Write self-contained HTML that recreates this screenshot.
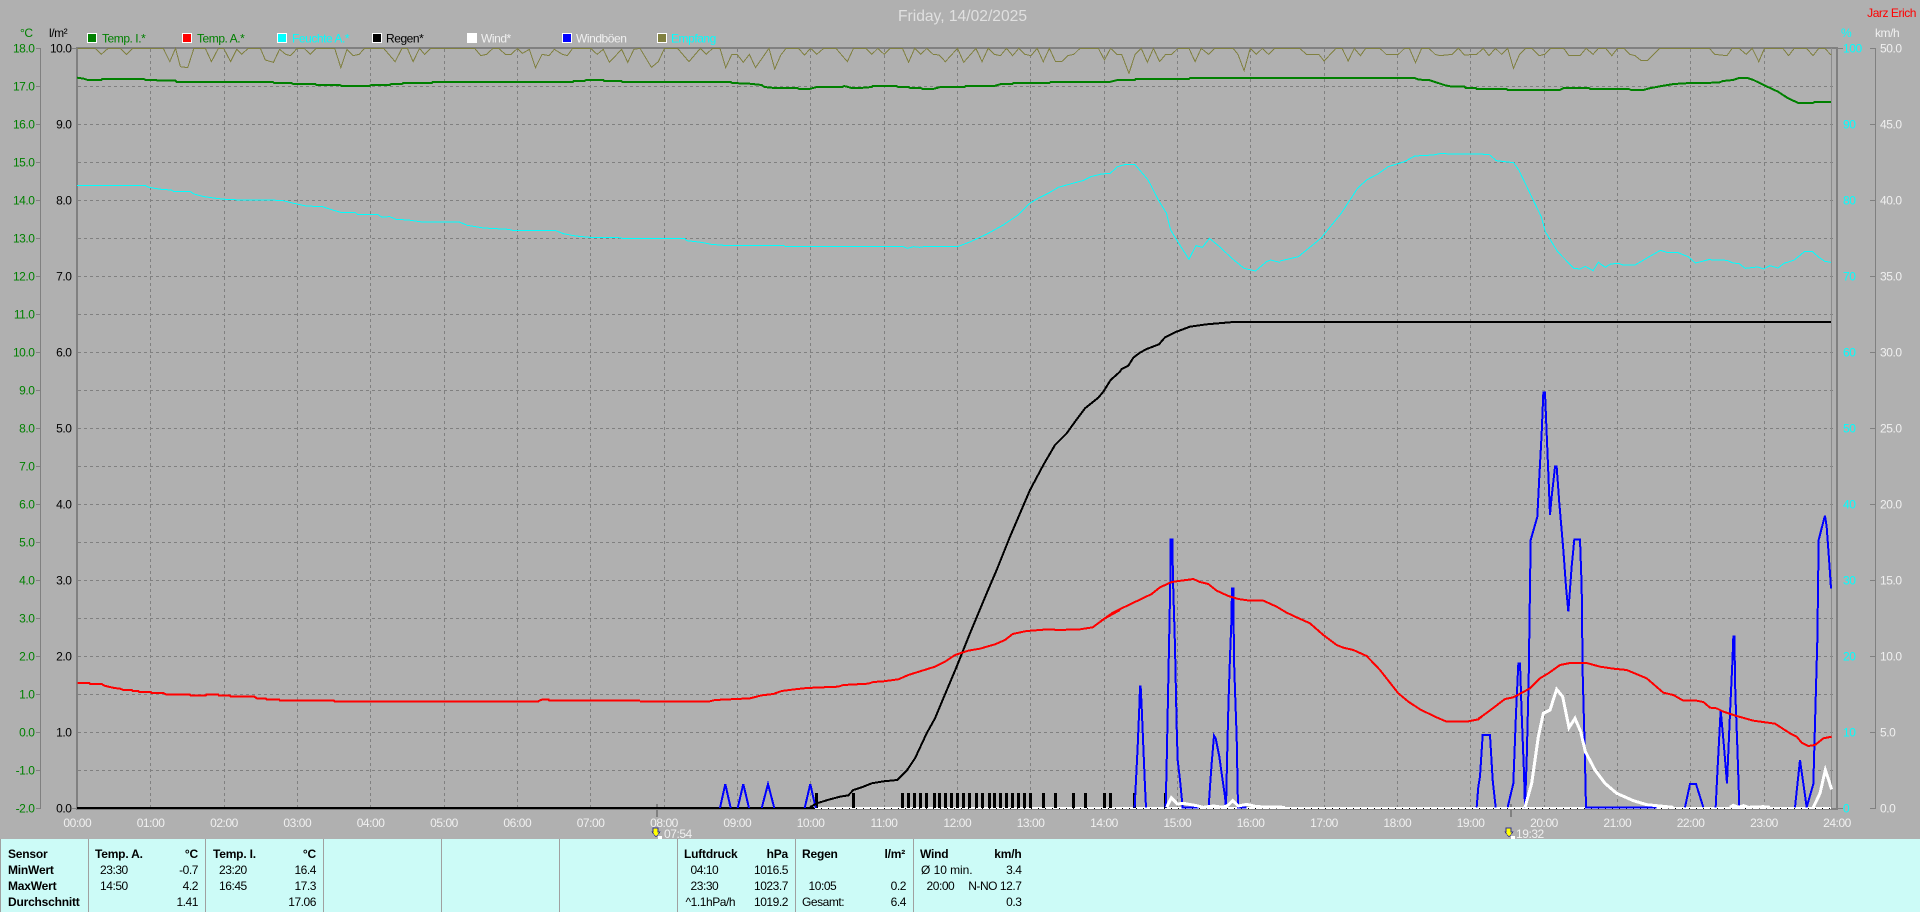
<!DOCTYPE html>
<html lang="de">
<head>
<meta charset="utf-8">
<title>Friday, 14/02/2025</title>
<style>
html,body{margin:0;padding:0;background:#b0b0b0;overflow:hidden}
svg{display:block}
text{font-family:"Liberation Sans",Arial,sans-serif;font-size:12px;letter-spacing:-.45px}
.l{fill:none;stroke-linejoin:miter;shape-rendering:crispEdges;vector-effect:non-scaling-stroke}
.e{text-anchor:end}
.m{text-anchor:middle}
.b{font-weight:bold;letter-spacing:-.2px;fill:#000}
.k{fill:#000}
.w{fill:#f0f0f0}
.g{fill:#008000}
.c{fill:#00ffff}
</style>
</head>
<body>
<svg width="1920" height="912" viewBox="0 0 1920 912" xmlns="http://www.w3.org/2000/svg">
<rect width="1920" height="912" fill="#b0b0b0"/>

<!-- grid -->
<path shape-rendering="crispEdges" fill="none" stroke="#808080" stroke-width="1" stroke-dasharray="3 3" d="M78 86.5H1837M78 124.5H1837M78 162.5H1837M78 200.5H1837M78 238.5H1837M78 276.5H1837M78 314.5H1837M78 352.5H1837M78 390.5H1837M78 428.5H1837M78 466.5H1837M78 504.5H1837M78 542.5H1837M78 580.5H1837M78 618.5H1837M78 656.5H1837M78 694.5H1837M78 732.5H1837M78 770.5H1837"/>
<path shape-rendering="crispEdges" fill="none" stroke="#808080" stroke-width="1" stroke-dasharray="3 3" d="M150.500 49V808M224.500 49V808M297.500 49V808M370.500 49V808M444.500 49V808M517.500 49V808M590.500 49V808M664.500 49V808M737.500 49V808M810.500 49V808M884.500 49V808M957.500 49V808M1030.500 49V808M1104.500 49V808M1177.500 49V808M1250.500 49V808M1324.500 49V808M1397.500 49V808M1470.500 49V808M1544.500 49V808M1617.500 49V808M1690.500 49V808M1764.500 49V808"/>

<!-- axes -->
<g shape-rendering="crispEdges" fill="#808080">
<rect x="76" y="47" width="2" height="763"/>
<rect x="76" y="47" width="1762" height="2"/>
<rect x="1836" y="47" width="2" height="763"/>
<rect x="1831" y="48" width="1" height="760" fill="#8c8c8c"/>
<rect x="76" y="808" width="1762" height="2"/>
<rect x="40" y="48" width="1" height="761"/>
<rect x="1875" y="48" width="1" height="761"/>
<rect x="72" y="48" width="4" height="1"/><rect x="72" y="808" width="4" height="1"/>
<rect x="1838" y="48" width="5" height="1"/><rect x="1838" y="808" width="5" height="1"/>
<path d="M36 48h4v1h-4zM36 86h4v1h-4zM36 124h4v1h-4zM36 162h4v1h-4zM36 200h4v1h-4zM36 238h4v1h-4zM36 276h4v1h-4zM36 314h4v1h-4zM36 352h4v1h-4zM36 390h4v1h-4zM36 428h4v1h-4zM36 466h4v1h-4zM36 504h4v1h-4zM36 542h4v1h-4zM36 580h4v1h-4zM36 618h4v1h-4zM36 656h4v1h-4zM36 694h4v1h-4zM36 732h4v1h-4zM36 770h4v1h-4zM36 808h4v1h-4z"/>
<path d="M1870 48h5v1h-5zM1870 124h5v1h-5zM1870 200h5v1h-5zM1870 276h5v1h-5zM1870 352h5v1h-5zM1870 428h5v1h-5zM1870 504h5v1h-5zM1870 580h5v1h-5zM1870 656h5v1h-5zM1870 732h5v1h-5zM1870 808h5v1h-5z"/>
<rect x="656" y="804" width="2" height="13"/>
<rect x="1510" y="804" width="2" height="13"/>
</g>

<!-- Empfang -->
<g stroke="#808040" stroke-width="1">
<polyline class="l" transform="scale(.40816,.33333)" points="190,145 233,145 248,163 265,145 295,145 310,163 325,145 400,145 416,185 430,145 442,200 460,203 475,145 503,145 518,185 535,145 548,145 565,185 580,148 592,163 608,145 638,145 650,180 670,187 685,148 700,163 712,167 728,145 745,145 760,163 775,145 820,145 835,203 850,148 865,167 880,163 893,145 940,145 968,185 985,145 998,145 1012,185 1028,145 1040,163 1055,145 1163,145 1178,167 1192,163 1208,145 1222,145 1238,163 1252,163 1268,145 1280,160 1297,148 1312,203 1328,163 1345,167 1358,148 1378,163 1390,167 1403,145 1447,145 1463,163 1478,148 1493,187 1523,148 1538,187 1553,148 1568,145"/>
<polyline class="l" transform="translate(640,30) scale(.40816,.33333)" points="0,55 28,112 45,95 60,55 92,55 120,95 148,55 162,73 178,55 196,55 210,113 225,73 238,73 253,97 268,73 283,113 316,55 330,117 345,75 358,55 388,55 403,75 418,55 433,73 450,55 480,55 508,95 523,55 553,55 568,73 583,55 598,73 613,55 643,55 658,97 673,55 688,73 703,55 718,73 733,75 748,95 778,55 793,97 823,55 838,95 853,55 868,73 883,77 898,55 913,77 928,55 943,73 958,77 973,55 988,95 1003,55 1018,95 1033,95 1048,77 1063,73 1078,55 1123,55 1138,90 1153,55 1168,73 1180,73 1198,130 1213,73 1228,55 1243,97 1258,55 1273,95 1288,73 1303,73 1318,55 1345,55 1360,95 1375,55 1393,73 1408,55 1453,55 1465,73 1480,122 1495,55 1510,73 1525,55 1540,73 1555,55 1568,55"/>
<polyline class="l" transform="translate(1280,0) scale(.40816,.33333)" points="0,145 48,145 65,163 95,163 108,183 137,145 152,145 167,183 182,145 197,167 210,145 245,145 260,163 290,163 305,145 317,145 332,188 347,145 365,145 380,163 392,167 422,163 437,145 452,165 482,163 498,145 512,167 528,145 543,163 558,145 572,205 587,163 602,145 617,145 635,167 648,163 663,145 695,145 708,167 735,167 750,145 767,163 780,145 798,145 813,167 827,145 843,145 857,163 870,167 885,182 900,182 930,145 1052,145 1065,163 1095,167 1108,145 1125,145 1142,163 1157,145 1173,185 1187,145 1232,145 1246,167 1260,145 1290,145 1306,167 1320,145 1335,145 1350,165"/>
</g>

<!-- Temp I -->
<g stroke="#008000" stroke-width="2">
<polyline class="l" transform="scale(.40816,.33333)" points="189,233 205,236 215,240 248,240 250,237 352,237 357,240 383,240 385,242 430,242 433,246 668,246 672,249 714,249 718,252 772,252 776,255 833,255 837,258 905,258 910,255 955,255 958,252 985,252 988,249 1058,249 1060,246 1403,246 1406,243 1432,243 1436,240 1478,240 1480,243 1522,243 1525,246 1568,246"/>
<polyline class="l" transform="translate(640,30) scale(.40816,.33333)" points="0,156 222,156 226,159 268,161 298,165 305,171 330,174 385,174 390,177 415,177 433,171 495,171 500,168 510,171 518,174 540,174 568,171 570,168 628,168 632,171 658,171 662,174 688,174 692,177 718,177 736,171 795,171 798,168 868,168 885,162 912,162 915,159 1003,159 1006,156 1150,156 1170,150 1212,150 1215,147 1345,147 1348,144 1568,144"/>
<polyline class="l" transform="translate(1280,0) scale(.40816,.33333)" points="0,234 330,234 340,239 365,240 380,246 405,256 422,260 452,260 455,264 480,264 482,267 555,267 558,270 685,270 695,264 757,264 760,267 855,267 860,270 890,270 905,265 935,258 965,252 1005,249 1075,248 1085,243 1110,240 1125,234 1145,234 1160,240 1185,255 1220,275 1245,295 1270,309 1305,309 1310,306 1350,306"/>
</g>

<!-- Feuchte -->
<g stroke="#00ffff" stroke-width="1">
<polyline class="l" transform="scale(.40816,.33333)" points="189,556 355,556 365,562 395,568 420,570 425,574 465,574 475,582 500,590 530,595 560,599 690,601 720,610 750,618 790,620 815,630 835,637 870,637 875,643 925,643 935,651 955,650 970,658 1000,660 1035,666 1125,666 1145,676 1185,684 1245,688 1255,691 1360,691 1380,701 1410,708 1445,712 1515,713 1525,715 1568,715"/>
<polyline class="l" transform="translate(640,30) scale(.40816,.33333)" points="0,625 108,625 115,632 150,637 175,643 205,646 350,646 358,650 645,650 655,655 670,650 685,652 695,650 778,650 810,635 850,612 890,585 925,556 955,520 975,505 1000,490 1025,472 1060,460 1085,452 1105,440 1130,432 1152,430 1170,410 1190,403 1212,403 1245,450 1270,510 1290,550 1300,600 1320,640 1345,688 1362,647 1378,652 1395,625 1420,650 1450,685 1480,715 1508,723 1535,695 1545,690 1568,697"/>
<polyline class="l" transform="translate(1280,0) scale(.40816,.33333)" points="0,783 45,770 70,745 100,715 150,640 190,565 212,540 240,522 265,500 305,485 330,468 375,465 392,461 512,463 530,482 572,488 585,510 640,650 650,695 680,755 720,805 735,807 748,799 767,812 780,787 797,802 810,792 830,790 840,795 870,795 905,770 932,751 950,758 975,758 1000,770 1018,789 1050,779 1095,781 1110,789 1125,791 1140,805 1170,801 1185,807 1200,797 1220,804 1235,790 1260,780 1285,755 1305,755 1320,772 1335,784 1350,787"/>
</g>

<!-- baseline -->
<path shape-rendering="crispEdges" d="M77 808H814" stroke="#000" stroke-width="2" fill="none"/>
<path shape-rendering="crispEdges" d="M814 808H1831" stroke="#fff" stroke-width="2" fill="none"/>
<path shape-rendering="crispEdges" d="M814 808.500H1831" stroke="#000" stroke-width="1" stroke-dasharray="1 6" fill="none"/>

<!-- Regen bars -->
<path shape-rendering="crispEdges" stroke="#000" stroke-width="3" fill="none" d="M816.500 793V808M853.500 793V808M902.500 793V808M908.500 793V808M914.500 793V808M920.500 793V808M926.500 793V808M934.500 793V808M939.500 793V808M945.500 793V808M951.500 793V808M957.500 793V808M963.500 793V808M969.500 793V808M976.500 793V808M982.500 793V808M989.500 793V808M994.500 793V808M1000.500 793V808M1006.500 793V808M1012.500 793V808M1018.500 793V808M1024.500 793V808M1030.500 793V808M1043.500 793V808M1055.500 793V808M1073.500 793V808M1085.500 793V808M1104.500 793V808M1110.500 793V808M1134.500 793V808M1165.500 793V808"/>

<!-- Windboeen -->
<g stroke="#0000ff" stroke-width="2">
<polyline class="l" points="720,808 725.300,784 730.700,808"/>
<polyline class="l" points="737.700,808 743.300,784 749,808"/>
<polyline class="l" points="761.700,808 768,784 774.300,808"/>
<polyline class="l" points="804.700,808 810.300,784 815.700,808"/>
<g transform="translate(1100,380) scale(.33333)">
<polyline class="l" points="104,1282 107,1220 113,1100 118,980 120,920 122,920 125,980 130,1100 135,1220 138,1282"/>
<polyline class="l" points="197,1282 200,1150 207,800 211,600 212,478 217,478 219,600 225,800 230,1040 233,1140 240,1200 248,1282 295,1282"/>
<polyline class="l" points="326,1282 330,1220 335,1150 342,1067 347,1075 358,1130 365,1180 375,1250 378,1282 383,1060 386,950 390,830 394,730 396,625 400,625 402,840 406,960 410,1070 414,1282 440,1282"/>
</g>
<g transform="translate(1480,380) scale(.33333)">
<polyline class="l" points="-10,1282 -5,1220 0,1190 8,1065 30,1065 38,1200 47,1282"/>
<polyline class="l" points="83,1282 100,1210 108,1000 115,850 120,850 125,1000 132,1180 135,1282 140,1140 146,900 152,480 172,410 178,290 185,160 190,38 195,38 200,160 205,280 210,405 215,350 225,260 230,260 238,370 250,510 258,620 265,695 275,560 283,478 300,478 305,620 308,880 314,1100 318,1282 530,1282"/>
<polyline class="l" points="615,1282 630,1212 648,1212 670,1282"/>
<polyline class="l" points="707,1282 712,1180 722,990 732,1100 741,1210 750,1000 757,850 760,770 763,770 766,940 772,1100 778,1282"/>
<polyline class="l" points="945,1282 960,1140 970,1210 980,1282 1000,1212 1007,960 1012,780 1016,480 1030,425 1035,407 1040,440 1048,550 1053,625"/>
</g>
</g>

<!-- Wind -->
<g stroke="#ffffff" stroke-width="3">
<polyline class="l" transform="translate(1100,380) scale(.33333)" points="200,1282 214,1253 232,1272 250,1270 290,1277 310,1282 340,1278 370,1282 385,1275 398,1262 415,1278 440,1273 470,1280 555,1282"/>
<polyline class="l" transform="translate(1480,380) scale(.33333)" points="135,1282 155,1210 175,1070 190,1000 210,990 230,928 248,950 267,1043 285,1015 302,1055 316,1115 345,1170 375,1210 410,1240 460,1262 500,1274 560,1280 580,1282"/>
<polyline class="l" transform="translate(1480,380) scale(.33333)" points="750,1282 760,1276 775,1282 790,1277 805,1282 850,1280 870,1282"/>
<polyline class="l" transform="translate(1480,380) scale(.33333)" points="1000,1282 1020,1240 1036,1170 1055,1228"/>
</g>

<!-- Regen -->
<g stroke="#000" stroke-width="2">
<polyline class="l" transform="translate(640,330) scale(.33333)" points="510,1432 530,1420 570,1408 600,1400 625,1396 640,1380 665,1372 695,1360 730,1354 772,1350 800,1322 825,1285 860,1210 885,1165 910,1105 950,1010 990,910 1040,790 1070,720 1110,620 1170,480 1210,405 1245,345 1280,310 1300,282 1335,235 1375,203 1390,185 1412,150 1440,125"/>
<polyline class="l" transform="translate(1090,310) scale(.33333)" points="90,185 95,177 115,167 130,143 150,128 170,117 207,103 225,82 260,65 300,50 350,43 430,36 600,36"/>
<polyline class="l" points="1290,322 1831,322"/>
</g>

<!-- Temp A -->
<g stroke="#ff0000" stroke-width="2">
<polyline class="l" transform="translate(70,670) scale(.33333)" points="22,39 58,39 60,42 95,42 103,47 115,50 133,54 150,56 160,60 186,60 188,63 205,63 207,66 242,66 245,69 280,69 290,74 360,74 362,77 407,77 409,74 445,74 447,77 480,77 482,80 553,80 562,86 588,86 590,89 628,89 630,92 792,92 794,95 1404,95 1408,92 1416,89 1436,89 1438,92 1710,92"/>
<polyline class="l" transform="translate(640,330) scale(.33333)" points="0,1115 205,1115 225,1110 290,1107 330,1105 365,1096 400,1092 425,1083 465,1078 500,1074 595,1070 610,1065 685,1061 700,1056 730,1054 775,1048 805,1035 885,1010 915,995 945,975 985,962 1020,956 1065,943 1095,930 1118,912 1160,903 1225,898 1255,900 1320,898 1358,892 1395,865 1440,840"/>
<polyline class="l" transform="translate(1100,380) scale(.33333)" points="0,725 40,697 155,642 180,622 215,606 280,597 300,606 325,612 350,632 385,648 415,657 450,662 490,662 530,680 560,698 590,712 630,730 670,765 710,795 730,803 760,810 800,828 840,870 895,940 925,965 960,988 1005,1010 1040,1025 1100,1025 1135,1018 1145,1010"/>
<polyline class="l" transform="translate(1480,380) scale(.33333)" points="-5,1016 0,1013 25,995 75,957 100,952 150,925 180,895 205,880 240,855 270,849 320,849 360,860 400,866 440,870 500,895 550,938 580,945 610,962 650,962 670,966 690,983 710,985 730,995 770,1008 820,1022 885,1031 930,1060 950,1070 965,1088 985,1098 1005,1095 1030,1075 1055,1070"/>
</g>

<!-- header text -->
<text x="898" y="21" style="font-size:16px;letter-spacing:0" textLength="129" lengthAdjust="spacingAndGlyphs" fill="#e0e0e0">Friday, 14/02/2025</text>
<text x="1916" y="17" class="e" fill="#ff0000">Jarz Erich</text>
<text x="20" y="37" class="g">°C</text>
<text x="49" y="37" class="k">l/m²</text>
<text x="1841" y="37" class="c">%</text>
<text x="1875" y="37" class="w">km/h</text>

<!-- legend -->
<g shape-rendering="crispEdges" stroke="#fff" stroke-width="1">
<rect x="87.500" y="33.500" width="9" height="9" fill="#008000"/>
<rect x="182.500" y="33.500" width="9" height="9" fill="#ff0000"/>
<rect x="277.500" y="33.500" width="9" height="9" fill="#00ffff"/>
<rect x="372.500" y="33.500" width="9" height="9" fill="#000000"/>
<rect x="467.500" y="33.500" width="9" height="9" fill="#ffffff"/>
<rect x="562.500" y="33.500" width="9" height="9" fill="#0000ff"/>
<rect x="657.500" y="33.500" width="9" height="9" fill="#808040"/>
</g>
<text x="102" y="42.500" class="g">Temp. I.*</text>
<text x="197" y="42.500" class="g">Temp. A.*</text>
<text x="292" y="42.500" class="c">Feuchte A.*</text>
<text x="386" y="42.500" class="k">Regen*</text>
<text x="481" y="42.500" class="w">Wind*</text>
<text x="576" y="42.500" class="w">Windböen</text>
<text x="671" y="42.500" class="c">Empfang</text>

<!-- left C axis -->
<g transform="translate(0,.5)">
<text x="34.500" y="52" class="e g">18.0</text>
<text x="34.500" y="90" class="e g">17.0</text>
<text x="34.500" y="128" class="e g">16.0</text>
<text x="34.500" y="166" class="e g">15.0</text>
<text x="34.500" y="204" class="e g">14.0</text>
<text x="34.500" y="242" class="e g">13.0</text>
<text x="34.500" y="280" class="e g">12.0</text>
<text x="34.500" y="318" class="e g">11.0</text>
<text x="34.500" y="356" class="e g">10.0</text>
<text x="34.500" y="394" class="e g">9.0</text>
<text x="34.500" y="432" class="e g">8.0</text>
<text x="34.500" y="470" class="e g">7.0</text>
<text x="34.500" y="508" class="e g">6.0</text>
<text x="34.500" y="546" class="e g">5.0</text>
<text x="34.500" y="584" class="e g">4.0</text>
<text x="34.500" y="622" class="e g">3.0</text>
<text x="34.500" y="660" class="e g">2.0</text>
<text x="34.500" y="698" class="e g">1.0</text>
<text x="34.500" y="736" class="e g">0.0</text>
<text x="34.500" y="774" class="e g">-1.0</text>
<text x="34.500" y="812" class="e g">-2.0</text>
</g>
<!-- left l/m2 axis -->
<g transform="translate(0,.5)">
<text x="71.500" y="52" class="e k">10.0</text>
<text x="71.500" y="128" class="e k">9.0</text>
<text x="71.500" y="204" class="e k">8.0</text>
<text x="71.500" y="280" class="e k">7.0</text>
<text x="71.500" y="356" class="e k">6.0</text>
<text x="71.500" y="432" class="e k">5.0</text>
<text x="71.500" y="508" class="e k">4.0</text>
<text x="71.500" y="584" class="e k">3.0</text>
<text x="71.500" y="660" class="e k">2.0</text>
<text x="71.500" y="736" class="e k">1.0</text>
<text x="71.500" y="812" class="e k">0.0</text>
</g>
<!-- right % axis -->
<g transform="translate(0,.5)">
<text x="1843" y="52" class="c">100</text>
<text x="1843" y="128" class="c">90</text>
<text x="1843" y="204" class="c">80</text>
<text x="1843" y="280" class="c">70</text>
<text x="1843" y="356" class="c">60</text>
<text x="1843" y="432" class="c">50</text>
<text x="1843" y="508" class="c">40</text>
<text x="1843" y="584" class="c">30</text>
<text x="1843" y="660" class="c">20</text>
<text x="1843" y="736" class="c">10</text>
<text x="1843" y="812" class="c">0</text>
</g>
<!-- right km/h axis -->
<g transform="translate(0,.5)">
<text x="1880" y="52" class="w">50.0</text>
<text x="1880" y="128" class="w">45.0</text>
<text x="1880" y="204" class="w">40.0</text>
<text x="1880" y="280" class="w">35.0</text>
<text x="1880" y="356" class="w">30.0</text>
<text x="1880" y="432" class="w">25.0</text>
<text x="1880" y="508" class="w">20.0</text>
<text x="1880" y="584" class="w">15.0</text>
<text x="1880" y="660" class="w">10.0</text>
<text x="1880" y="736" class="w">5.0</text>
<text x="1880" y="812" class="w">0.0</text>
</g>

<!-- hour labels -->
<g>
<text x="77.300" y="827" class="m w">00:00</text>
<text x="150.600" y="827" class="m w">01:00</text>
<text x="224" y="827" class="m w">02:00</text>
<text x="297.300" y="827" class="m w">03:00</text>
<text x="370.600" y="827" class="m w">04:00</text>
<text x="444" y="827" class="m w">05:00</text>
<text x="517.300" y="827" class="m w">06:00</text>
<text x="590.600" y="827" class="m w">07:00</text>
<text x="664" y="827" class="m w">08:00</text>
<text x="737.300" y="827" class="m w">09:00</text>
<text x="810.600" y="827" class="m w">10:00</text>
<text x="884" y="827" class="m w">11:00</text>
<text x="957.300" y="827" class="m w">12:00</text>
<text x="1030.600" y="827" class="m w">13:00</text>
<text x="1104" y="827" class="m w">14:00</text>
<text x="1177.300" y="827" class="m w">15:00</text>
<text x="1250.600" y="827" class="m w">16:00</text>
<text x="1324" y="827" class="m w">17:00</text>
<text x="1397.300" y="827" class="m w">18:00</text>
<text x="1470.600" y="827" class="m w">19:00</text>
<text x="1544" y="827" class="m w">20:00</text>
<text x="1617.300" y="827" class="m w">21:00</text>
<text x="1690.600" y="827" class="m w">22:00</text>
<text x="1764" y="827" class="m w">23:00</text>
<text x="1837" y="827" class="m w">24:00</text>
</g>

<!-- sun markers -->
<text x="664" y="838" class="w">07:54</text>
<text x="1516" y="838" class="w">19:32</text>
<g shape-rendering="crispEdges">
<path d="M653 828h5v4h2l-4 5-4-5h1z" fill="#ffff00" stroke="#303090" stroke-width=".6"/>
<rect x="658" y="836" width="4" height="3" fill="#fff"/>
<path d="M1506 828h5v4h2l-4 5-4-5h1z" fill="#ffff00" stroke="#303090" stroke-width=".6"/>
<rect x="1511" y="836" width="4" height="3" fill="#fff"/>
</g>

<!-- bottom panel -->
<rect x="0" y="839" width="1920" height="73" fill="#ccfbf7" shape-rendering="crispEdges"/>
<g fill="#a0a0a0" shape-rendering="crispEdges">
<rect x="0" y="839" width="1" height="73"/>
<rect x="88" y="839" width="1" height="73"/>
<rect x="205" y="839" width="1" height="73"/>
<rect x="323" y="839" width="1" height="73"/>
<rect x="441" y="839" width="1" height="73"/>
<rect x="559" y="839" width="1" height="73"/>
<rect x="677" y="839" width="1" height="73"/>
<rect x="795" y="839" width="1" height="73"/>
<rect x="913" y="839" width="1" height="73"/>
</g>
<g class="k">
<text x="8" y="858" class="b">Sensor</text>
<text x="8" y="874" class="b">MinWert</text>
<text x="8" y="890" class="b">MaxWert</text>
<text x="8" y="906" class="b">Durchschnitt</text>

<text x="95" y="858" class="b">Temp. A.</text>
<text x="198" y="858" class="b e">°C</text>
<text x="100" y="874">23:30</text>
<text x="198" y="874" class="e">-0.7</text>
<text x="100" y="890">14:50</text>
<text x="198" y="890" class="e">4.2</text>
<text x="198" y="906" class="e">1.41</text>

<text x="213" y="858" class="b">Temp. I.</text>
<text x="316" y="858" class="b e">°C</text>
<text x="219" y="874">23:20</text>
<text x="316" y="874" class="e">16.4</text>
<text x="219" y="890">16:45</text>
<text x="316" y="890" class="e">17.3</text>
<text x="316" y="906" class="e">17.06</text>

<text x="684" y="858" class="b">Luftdruck</text>
<text x="788" y="858" class="b e">hPa</text>
<text x="690.500" y="874">04:10</text>
<text x="788" y="874" class="e">1016.5</text>
<text x="690.500" y="890">23:30</text>
<text x="788" y="890" class="e">1023.7</text>
<text x="685.500" y="906">^1.1hPa/h</text>
<text x="788" y="906" class="e">1019.2</text>

<text x="802" y="858" class="b">Regen</text>
<text x="905" y="858" class="b e">l/m²</text>
<text x="808.500" y="890">10:05</text>
<text x="906" y="890" class="e">0.2</text>
<text x="802" y="906">Gesamt:</text>
<text x="906" y="906" class="e">6.4</text>

<text x="920" y="858" class="b">Wind</text>
<text x="1021.500" y="858" class="b e">km/h</text>
<text x="921" y="874" style="letter-spacing:-.05px">Ø 10 min.</text>
<text x="1021.500" y="874" class="e">3.4</text>
<text x="926.500" y="890">20:00</text>
<text x="1021.500" y="890" class="e">N-NO 12.7</text>
<text x="1021.500" y="906" class="e">0.3</text>
</g>
</svg>
</body>
</html>
